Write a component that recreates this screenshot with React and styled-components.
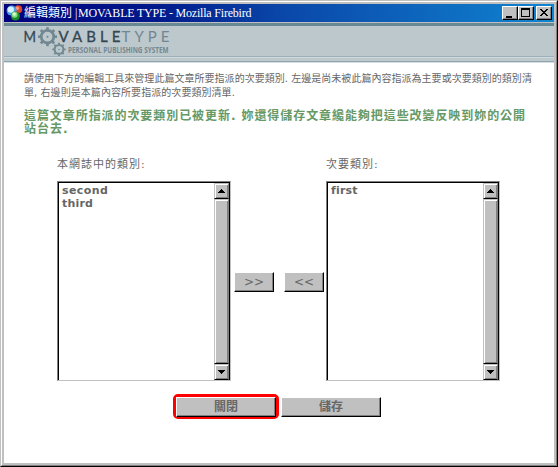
import React from 'react';
import styled, { createGlobalStyle } from 'styled-components';

const GlobalStyle = createGlobalStyle`
  * { box-sizing: border-box; }
  body { margin: 0; overflow: hidden; background: #fff; }
  svg { display: block; }
`;

const sans = '"DejaVu Sans", "Noto Sans CJK TC", sans-serif';

const Window = styled.div`
  width: 558px;
  height: 467px;
  background: #c0c0c0;
  border: 1px solid;
  border-color: #c0c0c0 #000 #000 #c0c0c0;
`;

const Frame = styled.div`
  display: flex;
  flex-direction: column;
  height: 465px;
  padding: 2px;
  border: 1px solid;
  border-color: #fff #808080 #808080 #fff;
`;

const TitleBar = styled.header`
  display: flex;
  align-items: center;
  flex: 0 0 18px;
  padding: 0 2px;
  background: linear-gradient(90deg, #00007b 0%, #001a8c 28%, #0a46a8 50%, #1084d0 100%);
`;

const WindowTitle = styled.h1`
  display: flex;
  align-items: center;
  flex: 1;
  margin: 0;
  height: 18px;
  color: #fff;
  font: 12px/18px "Liberation Serif", "Noto Sans CJK TC", serif;
  white-space: pre;
`;

const TitlePart = styled.span`
  width: ${(p) => p.$width}px;
  margin-left: ${(p) => p.$gap}px;
  letter-spacing: ${(p) => p.$spacing}px;
`;

const Controls = styled.div`
  display: flex;
`;

const ControlButton = styled.button`
  width: 16px;
  height: 14px;
  padding: 0;
  margin-left: ${(p) => (p.$apart ? 2 : 0)}px;
  border: 1px solid;
  border-color: #fff #000 #000 #fff;
  background: #c0c0c0;
  box-shadow: inset -1px -1px #808080;
`;

const Banner = styled.div`
  flex: 0 0 41px;
  border-top: 1px solid #c0c0c0;
  padding-left: 18px;
  background: linear-gradient(#688893 0 3px, #bdc8cd 3px 33px, #9db0b9 33px 34px,
    #d0dade 34px 35px, #bdc8cd 35px 38px, #8fa4af 38px 39px, #d5e0e5 39px 40px);
`;

const Page = styled.main`
  flex: 1;
  background: #fff;
  color: #666;
  font-family: ${sans};
`;

const Intro = styled.p`
  margin: 0;
  padding: 9px 0 0 20px;
  font-size: 10px;
  line-height: 14px;
  white-space: nowrap;
`;

const Notice = styled.p`
  margin: 0;
  padding: 10px 0 0 20px;
  color: #669966;
  font-size: 12px;
  font-weight: bold;
  line-height: 13px;
  white-space: nowrap;
`;

const Line = styled.span`
  display: block;
  letter-spacing: ${(p) => p.$spacing}px;
`;

const Picker = styled.section`
  display: flex;
  margin: 20px 0 0 53px;
`;

const Column = styled.div`
  width: 174px;
`;

const Label = styled.label`
  display: block;
  height: 25px;
  font-size: 11px;
  line-height: 17px;
  letter-spacing: 1px;
`;

const ListBox = styled.div`
  display: flex;
  height: 200px;
  border: 1px solid;
  border-color: #808080 #c0c0c0 #c0c0c0 #808080;
`;

const ListInner = styled.div`
  display: flex;
  flex: 1;
  border: solid #000;
  border-width: 1px 0 0 1px;
`;

const Options = styled.div`
  flex: 1;
  padding: 1px 0 0 3px;
  font: bold 11px/13px ${sans};
`;

const Option = styled.div`
  letter-spacing: ${(p) => p.$spacing}px;
`;

const ScrollBar = styled.div`
  display: flex;
  flex-direction: column;
  width: 16px;
  border-right: 1px solid #000;
`;

const ScrollPart = styled.div`
  display: flex;
  align-items: center;
  justify-content: center;
  flex: ${(p) => (p.$thumb ? '1' : '0 0 16px')};
  background: #c0c0c0;
  border: 1px solid;
  border-color: #c0c0c0 #808080 #000 #c0c0c0;
  box-shadow: inset 1px 1px #fff, inset -1px -1px #808080;
`;

const Moves = styled.div`
  display: flex;
  gap: 10px;
  width: 95px;
  padding: 116px 2px 0 3px;
`;

const PushButton = styled.button`
  width: ${(p) => p.$width}px;
  height: 20px;
  padding: 0;
  border: 1px solid;
  border-color: #fff #000 #000 #fff;
  background: #c0c0c0;
  box-shadow: inset -1px -1px #808080;
  color: #666;
  font: ${(p) => (p.$bold ? 'bold' : 'normal')} 12px/16px ${sans};
  text-align: center;
`;

const Actions = styled.footer`
  display: flex;
  align-items: center;
  gap: 2px;
  margin: 13px 0 0 169px;
`;

const Highlight = styled.div`
  display: flex;
  align-items: center;
  justify-content: center;
  width: 106px;
  height: 25px;
  border: 3px solid #f00;
  border-radius: 5px;
`;

const BrowserIcon = () => (
  <svg width="18" height="18" viewBox="0 0 18 18">
    <circle cx="12.2" cy="5.2" r="4" fill="#df442b" />
    <circle cx="11.4" cy="4.2" r="1.7" fill="#ff9a7e" />
    <circle cx="5.6" cy="6.6" r="5" fill="#4e9de8" />
    <circle cx="4.8" cy="5.6" r="3.2" fill="#d4f2ff" />
    <circle cx="9.4" cy="12" r="4.6" fill="#188a27" />
    <circle cx="8.6" cy="10.8" r="3" fill="#83df7d" />
    <circle cx="8.2" cy="10.1" r="1.6" fill="#e0ffd8" />
  </svg>
);

const Gear = ({ x, y, radius, ring, color }) => (
  <g transform={`translate(${x} ${y})`} fill="none" stroke={color}>
    <circle r={radius * 0.66} strokeWidth={ring} />
    {[0, 45, 90, 135, 180, 225, 270, 315].map((a) => (
      <path key={a} d={`M0 ${-radius * 0.74}V${-radius}`} strokeWidth={radius * 0.28} transform={`rotate(${a})`} />
    ))}
    <circle r={radius * 0.11} fill={color} stroke="none" />
  </g>
);

const LogoText = styled.text`
  font: ${(p) => (p.$small ? 'bold 8px "Open Sans"' : '15px Lato')}, sans-serif;
`;

const Logo = () => (
  <svg width="155" height="38" viewBox="0 0 155 38">
    <g fill="#344652" stroke="#344652" strokeWidth=".3">
      <LogoText x="1.5" y="18.5" textLength="12.5" lengthAdjust="spacingAndGlyphs">M</LogoText>
      <LogoText x="36.5" y="18.5" textLength="62" lengthAdjust="spacing">VABLE</LogoText>
    </g>
    <LogoText x="99.5" y="18.5" textLength="48" lengthAdjust="spacing" fill="#71868f">TYPE</LogoText>
    <Gear x={25.5} y={13.7} radius={9.5} ring={2.7} color="#718891" />
    <Gear x={37} y={26.4} radius={6.6} ring={2} color="#718891" />
    <LogoText $small x="46" y="29.5" textLength="100.5" lengthAdjust="spacingAndGlyphs" fill="#738991">
      PERSONAL PUBLISHING SYSTEM
    </LogoText>
  </svg>
);

const controlPaths = {
  minimize: 'M3 9h6v2H3z',
  maximize: 'M2 1h9v9H2zM3 3v6h7V3z',
  close: 'M3 2h2v1h1v1h2V3h1V2h2v1h-1v1H9v1H8v1h1v1h1v1h1v1H9V8H8V7H6v1H5v1H3V8h1V7h1V6h1V5H5V4H4V3H3z',
};

const Control = ({ kind, apart }) => (
  <ControlButton $apart={apart} aria-label={kind}>
    <svg width="14" height="12" viewBox="0 0 14 12" shapeRendering="crispEdges">
      <path d={controlPaths[kind]} fillRule="evenodd" />
    </svg>
  </ControlButton>
);

const Arrow = ({ down }) => (
  <svg width="7" height="4" viewBox="0 0 7 4" shapeRendering="crispEdges">
    <path d={down ? 'M0 0h7v1H6v1H5v1H4v1H3V3H2V2H1V1H0z' : 'M3 0h1v1h1v1h1v1h1v1H0V3h1V2h1V1h1z'} />
  </svg>
);

const CategoryList = ({ label, items }) => (
  <Column>
    <Label>{label}</Label>
    <ListBox>
      <ListInner>
        <Options>
          {items.map((item) => (
            <Option key={item.name} $spacing={item.spacing}>{item.name}</Option>
          ))}
        </Options>
        <ScrollBar>
          <ScrollPart><Arrow /></ScrollPart>
          <ScrollPart $thumb />
          <ScrollPart><Arrow down /></ScrollPart>
        </ScrollBar>
      </ListInner>
    </ListBox>
  </Column>
);

export default function App() {
  return (
    <>
      <GlobalStyle />
      <Window>
        <Frame>
          <TitleBar>
            <BrowserIcon />
            <WindowTitle>
              <TitlePart $width={48} $gap={0} $spacing={0}>編輯類別</TitlePart>
              <TitlePart $width={3} $gap={3} $spacing={0}>|</TitlePart>
              <TitlePart $width={180} $gap={0} $spacing={-0.2}>MOVABLE TYPE - Mozilla Firebird</TitlePart>
            </WindowTitle>
            <Controls>
              <Control kind="minimize" />
              <Control kind="maximize" />
              <Control kind="close" apart />
            </Controls>
          </TitleBar>
          <Banner><Logo /></Banner>
          <Page>
            <Intro>
              <Line $spacing={0.03}>請使用下方的編輯工具來管理此篇文章所要指派的次要類別. 左邊是尚未被此篇內容指派為主要或次要類別的類別清</Line>
              <Line $spacing={0.06}>單, 右邊則是本篇內容所要指派的次要類別清單.</Line>
            </Intro>
            <Notice>
              <Line $spacing={0.93}>這篇文章所指派的次要類別已被更新. 妳還得儲存文章纔能夠把這些改變反映到妳的公開</Line>
              <Line $spacing={1}>站台去.</Line>
            </Notice>
            <Picker>
              <CategoryList
                label="本網誌中的類別:"
                items={[{ name: 'second', spacing: 0.4 }, { name: 'third', spacing: 0.2 }]}
              />
              <Moves>
                <PushButton $width={40}>&gt;&gt;</PushButton>
                <PushButton $width={40}>&lt;&lt;</PushButton>
              </Moves>
              <CategoryList label="次要類別:" items={[{ name: 'first', spacing: 0.2 }]} />
            </Picker>
            <Actions>
              <Highlight>
                <PushButton $width={100} $bold>關閉</PushButton>
              </Highlight>
              <PushButton $width={100} $bold>儲存</PushButton>
            </Actions>
          </Page>
        </Frame>
      </Window>
    </>
  );
}
